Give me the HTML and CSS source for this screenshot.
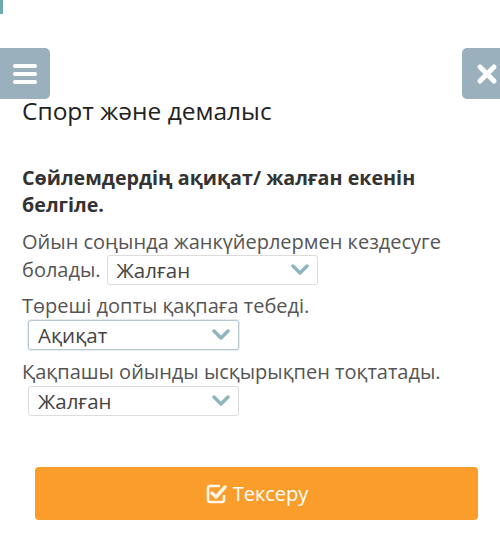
FILE: index.html
```html
<!DOCTYPE html>
<html lang="kk">
<head>
<meta charset="utf-8">
<title>Спорт және демалыс</title>
<link rel="stylesheet" href="styles.css">
</head>
<body>
<div class="page">
  <div class="edge-tab"></div>
  <div class="toolbar">
    <button class="tool-btn menu-btn" aria-label="Мәзір">
      <svg width="26" height="22" viewBox="0 0 26 22">
        <g stroke="#fff" stroke-width="4" stroke-linecap="round">
          <line x1="3" y1="3" x2="23" y2="3"/>
          <line x1="3" y1="11" x2="23" y2="11"/>
          <line x1="3" y1="19" x2="23" y2="19"/>
        </g>
      </svg>
    </button>
    <button class="tool-btn close-btn" aria-label="Жабу">
      <svg width="22" height="22" viewBox="0 0 22 22">
        <g stroke="#fff" stroke-width="5" stroke-linecap="round">
          <line x1="4" y1="4" x2="18" y2="18"/>
          <line x1="18" y1="4" x2="4" y2="18"/>
        </g>
      </svg>
    </button>
  </div>

  <h1 class="title">Спорт және демалыс</h1>

  <div class="task">
    <p class="question">Сөйлемдердің ақиқат/ жалған екенін белгіле.</p>

    <p class="sentence">Ойын соңында жанкүйерлермен кездесуге</p>
    <div class="sentence-row">
      <span class="sentence">болады.</span>
      <div class="select"><span class="select-value">Жалған</span><svg class="chev" width="18" height="12" viewBox="0 0 18 12"><path d="M2 2 L9 9 L16 2" fill="none" stroke="#8fb5bf" stroke-width="3.5" stroke-linecap="round" stroke-linejoin="round"/></svg></div>
    </div>

    <p class="sentence spaced">Төреші допты қақпаға тебеді.</p>
    <div class="select block-select focused"><span class="select-value">Ақиқат</span><svg class="chev" width="18" height="12" viewBox="0 0 18 12"><path d="M2 2 L9 9 L16 2" fill="none" stroke="#8fb5bf" stroke-width="3.5" stroke-linecap="round" stroke-linejoin="round"/></svg></div>

    <p class="sentence spaced">Қақпашы ойынды ысқырықпен тоқтатады.</p>
    <div class="select block-select"><span class="select-value">Жалған</span><svg class="chev" width="18" height="12" viewBox="0 0 18 12"><path d="M2 2 L9 9 L16 2" fill="none" stroke="#8fb5bf" stroke-width="3.5" stroke-linecap="round" stroke-linejoin="round"/></svg></div>
  </div>

  <div class="actions">
    <button class="check-btn">
      <svg width="22" height="22" viewBox="0 0 22 22">
        <path d="M15 3 H5 A2 2 0 0 0 3 5 V17 A2 2 0 0 0 5 19 H17 A2 2 0 0 0 19 17 V12" fill="none" stroke="#fff6e8" stroke-width="2.6"/>
        <path d="M7 10 L11 14 L20 4" fill="none" stroke="#fff6e8" stroke-width="3.4" stroke-linecap="round" stroke-linejoin="round"/>
      </svg>
      <span>Тексеру</span>
    </button>
  </div>
</div>
</body>
</html>
```

FILE: styles.css
```css
html, body {
  margin: 0;
  padding: 0;
  background: #fff;
  overflow: hidden;
}

body {
  font-family: "Open Sans", "Noto Sans", sans-serif;
  color: #555;
}

.page {
  position: relative;
  width: 500px;
  height: 551px;
}

.edge-tab {
  position: absolute;
  left: 0;
  top: 0;
  width: 3px;
  height: 14px;
  background: #6fa9b0;
}

.toolbar {
  display: flex;
  justify-content: space-between;
  padding-top: 48px;
}

.tool-btn {
  display: flex;
  align-items: center;
  justify-content: center;
  width: 50px;
  height: 51px;
  border: 0;
  padding: 0;
  background: #9bb0bd;
  border-radius: 5px;
}

.menu-btn {
  border-radius: 0 5px 5px 0;
}

.close-btn {
  margin-right: -12px;
  justify-content: flex-start;
  padding-left: 14px;
}

.title {
  margin: -4px 0 0 22px;
  font-size: 24.5px;
  font-weight: 400;
  line-height: 32px;
  color: #222;
}

.task {
  padding: 0 22px;
  margin-top: 37px;
}

.question {
  margin: 0;
  font-size: 19.7px;
  font-weight: 700;
  line-height: 27px;
  color: #333;
}

.sentence {
  margin: 0;
  font-size: 20px;
  line-height: 28px;
  color: #555;
}

.question + .sentence {
  margin-top: 10px;
}

.sentence.spaced {
  margin-top: 8px;
}

.sentence-row {
  display: flex;
  align-items: center;
  gap: 6px;
  height: 28px;
}

.select {
  display: flex;
  flex: none;
  align-items: center;
  justify-content: space-between;
  box-sizing: border-box;
  width: 211px;
  height: 30px;
  padding: 0 8px 0 9px;
  border: 1px solid #dcdcdc;
  border-radius: 3px;
  background: #fff;
  font-size: 20.5px;
  color: #444;
}

.block-select {
  margin-left: 6px;
}

.block-select.focused {
  border-color: #b7c9d0;
  box-shadow: 0 0 0 1px #e4ecef;
}

.chev {
  flex: none;
}

.actions {
  padding: 0 22px 0 35px;
  margin-top: 51px;
}

.check-btn {
  display: flex;
  align-items: center;
  justify-content: center;
  gap: 6px;
  width: 443px;
  height: 53px;
  border: 0;
  border-radius: 4px;
  background: #fb9d2b;
  color: #fff;
  font-family: "Open Sans", "Noto Sans", sans-serif;
  font-size: 20px;
}
```
